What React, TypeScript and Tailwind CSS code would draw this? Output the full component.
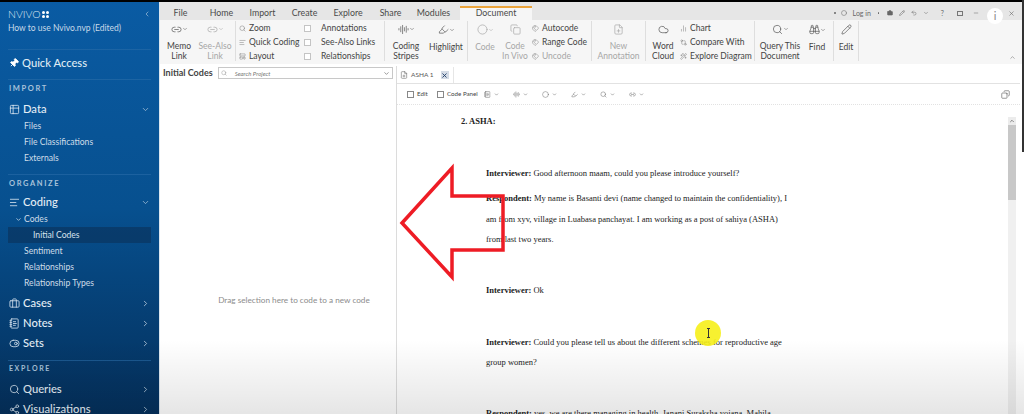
import {
  AlignLeft,
  BarChart2,
  Binoculars,
  Briefcase,
  ChevronDown,
  ChevronLeft,
  ChevronRight,
  ChevronUp,
  Circle,
  Cloud,
  Copy,
  FilePlus,
  GitCompare,
  Highlighter,
  Link2,
  LayoutTemplate,
  Minus,
  NotebookText,
  Pencil,
  Pin,
  Search,
  Share2,
  Table2,
  Tags,
  ToggleRight,
  Undo2,
  Wand2,
  X,
  AudioLines,
} from 'lucide-react';
import type { ComponentType, ReactNode } from 'react';

type IconType = ComponentType<{ className?: string; strokeWidth?: number }>;

const tabs = [
  { name: 'File', w: 'w-[41px]' },
  { name: 'Home', w: 'w-[41px]' },
  { name: 'Import', w: 'w-[41px]' },
  { name: 'Create', w: 'w-[43px]' },
  { name: 'Explore', w: 'w-[44px]' },
  { name: 'Share', w: 'w-[41px]' },
  { name: 'Modules', w: 'w-[45px]' },
];

function SectionLabel({ children }: { children: ReactNode }) {
  return (
    <div className="h-[17px] pl-[9px] text-[7.5px] leading-[17px] font-bold tracking-[1.6px] text-[#a9c3da]">
      {children}
    </div>
  );
}

function Divider() {
  return <div className="mx-[8px] h-px bg-[#2a6ca8]/60" />;
}

function NavHead({ icon: Icon, label, open }: { icon: IconType; label: string; open?: boolean }) {
  return (
    <div className={`flex h-[18px] items-center px-[9px] text-[#e3edf5] ${open ? '' : 'mb-[2px]'}`}>
      <Icon className="h-[11px] w-[11px] text-[#d5e2ee]" strokeWidth={1.8} />
      <span className="ml-[3px] flex-1 text-[11.2px] font-medium">{label}</span>
      {open ? (
        <ChevronDown className="h-[9px] w-[9px] text-[#a9c3da]" strokeWidth={2} />
      ) : (
        <ChevronRight className="h-[9px] w-[9px] text-[#c6d6e4]" strokeWidth={2} />
      )}
    </div>
  );
}

function NavSub({ label }: { label: string }) {
  return <div className="h-[16px] pl-[24px] text-[8.6px] leading-[16px] text-[#cfdde9]">{label}</div>;
}

function Sidebar() {
  return (
    <aside className="w-[159px] shrink-0 overflow-hidden bg-gradient-to-b from-[#0a5ba3] via-[#07508f] to-[#04305c] font-['Lato',sans-serif]">
      <div className="flex h-[21px] items-end px-[8px] pb-[4px] text-[#dbe7f1]">
        <span className="text-[10.5px] leading-none font-light">NVIVO</span>
        <span className="mb-[1px] ml-[1px] grid grid-cols-2 gap-[1.5px]">
          <i className="h-[3px] w-[3px] rounded-full bg-white" />
          <i className="h-[3px] w-[3px] rounded-full bg-white" />
          <i className="h-[3px] w-[3px] rounded-full bg-white" />
          <i className="h-[3px] w-[3px] rounded-full bg-white" />
        </span>
        <span className="flex-1" />
        <ChevronLeft className="mb-[1px] h-[8px] w-[8px] text-[#a9c3da]" />
      </div>
      <div className="h-[26px] pl-[8px] text-[8.5px] leading-[10px] text-[#c8d9e8]">
        How to use Nvivo.nvp (Edited)
      </div>
      <Divider />
      <div className="flex h-[29px] items-center pb-[3px] pl-[9px] text-[#dfeaf3]">
        <Pin className="h-[10px] w-[10px] rotate-45 fill-white text-white" />
        <span className="ml-[3px] text-[11.2px] font-medium">Quick Access</span>
      </div>
      <Divider />
      <SectionLabel>IMPORT</SectionLabel>
      <div className="h-[3px]" />
      <NavHead icon={Table2} label="Data" open />
      <NavSub label="Files" />
      <NavSub label="File Classifications" />
      <NavSub label="Externals" />
      <div className="h-[8px]" />
      <Divider />
      <SectionLabel>ORGANIZE</SectionLabel>
      <div className="h-px" />
      <NavHead icon={AlignLeft} label="Coding" open />
      <div className="flex h-[16px] items-center pl-[15px] text-[8.6px] text-[#cfdde9]">
        <ChevronDown className="h-[7px] w-[7px]" strokeWidth={2.5} />
        <span className="ml-[2px]">Codes</span>
      </div>
      <div className="mx-[8px] h-[16px] bg-[#0a3560]/70 pl-[25px] text-[8.6px] leading-[16px] text-[#d6e2ed]">
        Initial Codes
      </div>
      <NavSub label="Sentiment" />
      <NavSub label="Relationships" />
      <NavSub label="Relationship Types" />
      <div className="h-[3px]" />
      <NavHead icon={Briefcase} label="Cases" />
      <NavHead icon={NotebookText} label="Notes" />
      <NavHead icon={ToggleRight} label="Sets" />
      <div className="h-[6px]" />
      <Divider />
      <div className="h-[15px] pl-[9px] text-[7px] leading-[15px] font-bold tracking-[1.6px] text-[#a9c3da]">
        EXPLORE
      </div>
      <div className="h-[4px]" />
      <NavHead icon={Search} label="Queries" />
      <NavHead icon={Share2} label="Visualizations" />
    </aside>
  );
}

function BigBtn({
  icon: Icon,
  lines,
  w,
  dim,
  caret,
}: {
  icon: IconType;
  lines: string[];
  w: string;
  dim?: boolean;
  caret?: boolean;
}) {
  return (
    <div className={`flex shrink-0 flex-col items-center ${w} ${dim ? 'text-[#a6a6a6]' : 'text-[#555]'}`}>
      <div className="flex h-[21px] items-center pb-[4px]">
        <Icon className="h-[11px] w-[11px]" strokeWidth={1.5} />
        {caret && <ChevronDown className="h-[6px] w-[6px]" strokeWidth={2} />}
      </div>
      <div className={`text-center text-[8.5px] leading-[10px] ${dim ? 'text-[#a6a6a6]' : 'text-[#444]'}`}>
        {lines.map((l) => (
          <div key={l}>{l}</div>
        ))}
      </div>
    </div>
  );
}

function SmallBtn({ icon: Icon, label, dim }: { icon: IconType; label: string; dim?: boolean }) {
  return (
    <div className={`flex h-[14px] items-center whitespace-nowrap text-[8.5px] ${dim ? 'text-[#a6a6a6]' : 'text-[#444]'}`}>
      <Icon className="mr-[3px] h-[7px] w-[7px] text-[#777]" strokeWidth={1.6} />
      {label}
    </div>
  );
}

function Check({ label }: { label: string }) {
  return (
    <div className="flex h-[14px] items-center whitespace-nowrap text-[8.5px] text-[#444]">
      <span className="mr-[10px] h-[7px] w-[7px] border border-[#c4c4c4] bg-white" />
      {label}
    </div>
  );
}

function Ribbon() {
  return (
    <div className="relative flex h-[44px] shrink-0 items-stretch bg-[#f6f6f6] pt-px pb-[3px] text-[#444]">
      <div className="flex w-[76px] shrink-0 border-r border-[#dedede] pl-[2px]">
        <BigBtn icon={Link2} lines={['Memo', 'Link']} w="w-[34px]" caret />
        <BigBtn icon={Link2} lines={['See-Also', 'Link']} w="w-[38px]" dim caret />
      </div>
      <div className="flex w-[149px] shrink-0 border-r border-[#dedede] pl-[3px]">
        <div className="w-[65px]">
          <SmallBtn icon={Search} label="Zoom" />
          <SmallBtn icon={AlignLeft} label="Quick Coding" />
          <SmallBtn icon={LayoutTemplate} label="Layout" />
        </div>
        <div>
          <Check label="Annotations" />
          <Check label="See-Also Links" />
          <Check label="Relationships" />
        </div>
      </div>
      <div className="flex w-[83px] shrink-0 border-r border-[#dedede]">
        <BigBtn icon={AudioLines} lines={['Coding', 'Stripes']} w="w-[42px]" caret />
        <BigBtn icon={Highlighter} lines={['Highlight']} w="w-[38px]" caret />
      </div>
      <div className="flex w-[124px] shrink-0 border-r border-[#dedede] pl-[2px]">
        <BigBtn icon={Circle} lines={['Code']} w="w-[30px]" dim caret />
        <BigBtn icon={Copy} lines={['Code', 'In Vivo']} w="w-[30px]" dim />
        <div className="ml-[2px]">
          <SmallBtn icon={Tags} label="Autocode" />
          <SmallBtn icon={Tags} label="Range Code" />
          <SmallBtn icon={Tags} label="Uncode" dim />
        </div>
      </div>
      <div className="flex w-[54px] shrink-0 justify-center border-r border-[#dedede]">
        <BigBtn icon={FilePlus} lines={['New', 'Annotation']} w="w-[50px]" dim />
      </div>
      <div className="flex w-[109px] shrink-0 border-r border-[#dedede] pl-[3px]">
        <BigBtn icon={Cloud} lines={['Word', 'Cloud']} w="w-[28px]" />
        <div className="ml-[3px]">
          <SmallBtn icon={BarChart2} label="Chart" />
          <SmallBtn icon={GitCompare} label="Compare With" />
          <SmallBtn icon={Wand2} label="Explore Diagram" />
        </div>
      </div>
      <div className="flex w-[79px] shrink-0 border-r border-[#dedede] pl-[2px]">
        <BigBtn icon={Search} lines={['Query This', 'Document']} w="w-[46px]" caret />
        <BigBtn icon={Binoculars} lines={['Find']} w="w-[28px]" caret />
      </div>
      <div className="flex w-[25px] shrink-0 border-r border-[#dedede]">
        <BigBtn icon={Pencil} lines={['Edit']} w="w-[24px]" />
      </div>
      <div className="flex-1" />
      <ChevronUp className="mt-auto mr-[8px] h-[7px] w-[7px] text-[#777]" strokeWidth={2} />
    </div>
  );
}

function TabBar() {
  return (
    <div className="flex h-[18px] shrink-0 items-end bg-[#e6e6e6] text-[8.8px] text-[#4a4a4a]">
      {tabs.map((t) => (
        <div key={t.name} className={`h-[18px] text-center leading-[22px] ${t.w}`}>
          {t.name}
        </div>
      ))}
      <div className="ml-[4px] h-[14px] w-[72px] border-t-2 border-[#eba43b] bg-[#f6f6f6] text-center leading-[10px]">
        Document
      </div>
      <div className="flex h-[18px] flex-1 items-center justify-end gap-[6px] pt-[4px] pr-[9px] text-[7px] text-[#666]">
        <span className="flex items-center gap-[3px]">
          <i className="mr-[2px] h-[1.5px] w-[1.5px] rounded-full bg-[#666]" />
          <Circle className="h-[6px] w-[6px]" />
          <span className="ml-[3px]">Log in</span>
        </span>
        <i className="ml-[1px] h-[1.5px] w-[1.5px] rounded-full bg-[#666]" />
        <Briefcase className="ml-[1.5px] h-[6px] w-[6px] fill-[#666]" />
        <Pencil className="h-[6px] w-[6px]" />
        <Undo2 className="h-[6px] w-[6px]" />
        <ChevronDown className="h-[6px] w-[6px]" />
        <span className="ml-[6px]">?</span>
        <span className="ml-[7px] h-[5px] w-[6px] border border-[#777]" />
        <Minus className="ml-[4px] h-[6px] w-[6px]" />
        <X className="ml-[23px] h-[7px] w-[7px]" />
      </div>
    </div>
  );
}

function LeftPane() {
  return (
    <div className="flex w-[237px] shrink-0 flex-col border-r border-[#dcdcdc] pl-px">
      <div className="flex h-[14px] items-center pr-[3px] pl-[2px]">
        <span className="text-[9px] font-bold whitespace-nowrap text-[#444]">Initial Codes</span>
        <div className="ml-[5px] flex h-[12px] flex-1 items-center border border-[#c8c8c8] bg-white px-[2px]">
          <Search className="h-[6px] w-[6px] text-[#999]" />
          <span className="ml-[8px] flex-1 text-[6px] text-[#777] italic">Search Project</span>
          <ChevronDown className="h-[7px] w-[7px] text-[#555]" />
        </div>
      </div>
      <div className="flex flex-1 items-center justify-center pt-[106px] pl-[31px] text-[8.2px] text-[#8c8c8c]">
        Drag selection here to code to a new code
      </div>
    </div>
  );
}

function DocToolbar() {
  const icons: IconType[] = [NotebookText, AudioLines, Circle, Highlighter, Search, Link2];
  return (
    <div className="flex h-[21px] shrink-0 items-center border-b border-dotted border-[#e2e2e2] pl-[10px] text-[6.2px] text-[#444]">
      <span className="h-[7px] w-[7px] border border-[#888]" />
      <span className="ml-[3px] w-[20px]">Edit</span>
      <span className="h-[7px] w-[7px] border border-[#888]" />
      <span className="ml-[3px] w-[37px]">Code Panel</span>
      <div className="flex gap-[14px]">
        {icons.map((Icon, i) => (
          <span key={i} className="flex items-center gap-[3px] text-[#666]">
            <Icon className="h-[7px] w-[7px]" strokeWidth={1.6} />
            <ChevronDown className="h-[5px] w-[5px]" strokeWidth={2.5} />
          </span>
        ))}
      </div>
      <div className="flex-1" />
      <Copy className="mr-[10px] h-[9px] w-[9px] rotate-90 text-[#555]" strokeWidth={1.6} />
    </div>
  );
}

function DocBody() {
  return (
    <div className="flex flex-1 overflow-hidden">
      <div className="flex-1 font-['Liberation_Serif',serif] text-[8.5px] leading-[12px] text-[#222]">
        <div className="mt-[10px] ml-[64px] font-bold">2. ASHA:</div>
        <div className="ml-[89px] w-[320px]">
          <p className="mt-[40px]">
            <b>Interviewer:</b> Good afternoon maam, could you please introduce yourself?
          </p>
          <p className="mt-[13px]">
            <b>Respondent:</b> My name is Basanti devi (name changed to maintain the confidentiality), I
          </p>
          <p className="mt-[9px]">am from xyv, village in Luabasa panchayat. I am working as a post of sahiya (ASHA)</p>
          <p className="mt-[8px]">from last two years.</p>
          <p className="mt-[39px]">
            <b>Interviewer:</b> Ok
          </p>
          <p className="mt-[40px]">
            <b>Interviewer:</b> Could you please tell us about the different schemes for reproductive age
          </p>
          <p className="mt-[8px]">group women?</p>
          <p className="mt-[39px]">
            <b>Respondent:</b> yes, we are there managing in health, Janani Suraksha yojana, Mahila
          </p>
        </div>
      </div>
      <div className="mt-[12px] mr-[4px] flex w-[8px] shrink-0 flex-col">
        <div className="flex h-[8px] items-center justify-center bg-[#ececec]">
          <ChevronUp className="h-[6px] w-[6px] text-[#666]" strokeWidth={3} />
        </div>
        <div className="h-[75px] bg-[#c8c8c8]" />
        <div className="flex-1 bg-[#f0f0f0]" />
      </div>
    </div>
  );
}

function DocPane() {
  return (
    <div className="flex min-w-0 flex-1 flex-col pr-[4px]">
      <div className="flex h-[18px] shrink-0 items-end border-b border-[#e2e2e2] pl-[3px]">
        <div className="flex h-[16px] items-center gap-[3px] border-r border-[#e6e6e6] pr-[4px] text-[6.5px] text-[#555]">
          <FilePlus className="h-[8px] w-[8px]" strokeWidth={1.5} />
          <span>ASHA 1</span>
          <span className="ml-[4px] flex h-[8px] w-[8px] items-center justify-center bg-[#d5dce6]">
            <X className="h-[7px] w-[7px] text-[#1e3a66]" strokeWidth={3} />
          </span>
        </div>
      </div>
      <DocToolbar />
      <DocBody />
    </div>
  );
}

export default function App() {
  return (
    <div className="relative h-[414px] w-[1024px] overflow-hidden bg-white font-['Lato',sans-serif]">
      <div className="h-[2px] bg-black" />
      <div className="flex h-[412px]">
        <Sidebar />
        <div className="flex min-w-0 flex-1 flex-col border-l border-[#dbe6ef]">
          <TabBar />
          <Ribbon />
          <div className="flex min-h-0 flex-1 pt-[2px]">
            <LeftPane />
            <DocPane />
          </div>
        </div>
      </div>

      {/* annotation arrow drawn over the video */}
      <svg className="absolute top-[160px] left-[395px] h-[125px] w-[115px]" viewBox="395 160 115 125">
        <polygon
          points="402,223 452,168 452,196 503,196 503,250 452,250 452,277"
          fill="none"
          stroke="#ee1c25"
          strokeWidth="3.5"
          strokeLinejoin="miter"
        />
      </svg>

      {/* cursor highlight */}
      <div className="absolute top-[320px] left-[695px] h-[26px] w-[26px] rounded-full bg-[#f6f01a]/90 blur-[0.5px]" />
      <div className="absolute top-[328px] left-[707px] h-[10px] w-[3px] border-y border-[#333]">
        <div className="mx-auto h-full w-px bg-[#333]" />
      </div>

      {/* video player overlays */}
      <div className="absolute top-[8px] left-[987px] flex h-[16px] w-[16px] items-center justify-center rounded-full bg-white text-[11px] text-[#888]">
        i
      </div>
      <div className="absolute top-0 right-0 h-[152px] w-[2px] bg-[#333]" />
      <div className="pointer-events-none absolute right-0 bottom-0 left-0 h-[74px] bg-gradient-to-b from-black/0 to-black/10" />
    </div>
  );
}
